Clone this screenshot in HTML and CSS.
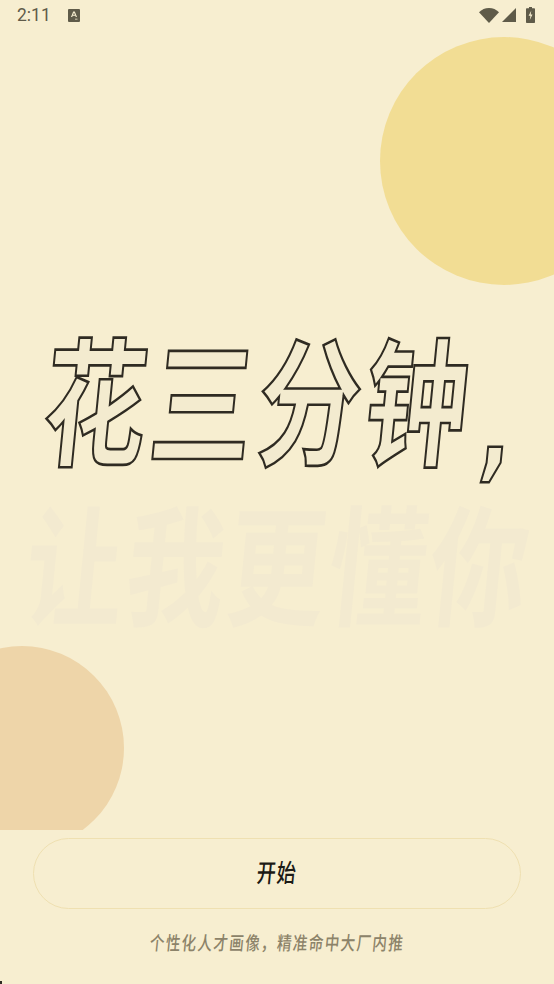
FILE: index.html
```html
<!DOCTYPE html>
<html lang="zh-CN">
<head>
<meta charset="utf-8">
<title>花三分钟</title>
<link rel="stylesheet" href="styles.css">
</head>
<body>
<div class="screen">
  <div class="hero">
    <div class="circle circle-top"></div>
    <div class="circle circle-bottom"></div>
    <header class="status">
      <span class="time">2:11</span>
      <svg class="a-icon" viewBox="0 0 12 13"><path fill="#5f5b49" fill-rule="evenodd" d="M1 0h10a1 1 0 0 1 1 1v11a1 1 0 0 1-1 1H1a1 1 0 0 1-1-1V1a1 1 0 0 1 1-1zM5.200 2.400 3 8h1.200l.45-1.300h2.700L7.800 8H9L6.800 2.400zM6 3.800l1 2H5zM7 9.800h2.500v.8H7z"/></svg>
      <span class="status-right">
        <svg class="wifi" viewBox="0 0 20 15"><path fill="#5f5b49" d="M0 4.200C2.700 1.600 6.200 0 10 0s7.300 1.600 10 4.200L10 15z"/></svg>
        <svg class="signal" viewBox="0 0 14 14"><path fill="#5f5b49" d="M14 0v14H0z"/></svg>
        <svg class="battery" viewBox="0 0 9 16"><path fill="#5f5b49" fill-rule="evenodd" d="M3 0h3v1.300h2.200a.8.8 0 0 1 .8.8v13.100a.8.8 0 0 1-.8.8H.8a.8.8 0 0 1-.8-.8V2.100a.8.8 0 0 1 .8-.8H3zM5.200 3.800 2.600 8.800h1.900L3.800 13l2.700-5.500H4.700z"/></svg>
      </span>
    </header>
    <div class="lines">
      <h1 class="line-main">花三分钟<span class="comma">,</span></h1>
      <p class="line-ghost">让我更懂你</p>
    </div>
  </div>
  <footer class="actions">
    <button class="start"><span class="start-label">开始</span></button>
    <p class="tagline">个性化人才画像，精准命中大厂内推</p>
  </footer>
</div>
</body>
</html>
```

FILE: styles.css
```css
* { box-sizing: border-box; margin: 0; padding: 0; }
html, body { width: 554px; height: 984px; overflow: hidden; }
body {
  background: #f7eed0;
  font-family: "Noto Sans CJK SC", "Noto Sans", sans-serif;
}
.screen { width: 554px; height: 984px; display: flex; flex-direction: column; }
.hero { position: relative; height: 830px; overflow: hidden; flex: none; }
.circle { position: absolute; border-radius: 50%; }
.circle-top { left: 380px; top: 37px; width: 248px; height: 248px; background: #f2dd94; }
.circle-bottom { left: -80px; top: 646px; width: 204px; height: 204px; background: #eed5a9; }
.status {
  position: relative;
  height: 30px;
  display: flex;
  align-items: center;
  padding: 0 19px 0 17px;
  color: #5f5b49;
}
.time { font: 400 17.500px/30px Roboto, sans-serif; width: 51px; }
.a-icon { width: 12px; height: 13px; }
.status-right { margin-left: auto; display: flex; align-items: center; gap: 3px; }
.wifi { width: 20px; height: 15px; }
.signal { width: 14px; height: 14px; }
.battery { width: 9px; height: 16px; margin-left: 7px; }
.lines { position: relative; padding-top: 291px; }
.line-main, .line-ghost { white-space: nowrap; transform-origin: 0 50%; }
.line-main {
  font-size: 103px;
  font-weight: 700;
  letter-spacing: 4px;
  line-height: 150px;
  color: #f3ebcf;
  -webkit-text-stroke: 2px #2f2b22;
  margin-left: 45px;
  transform: skewX(-5.600deg) scaleY(1.34);
}
.comma {
  font-family: "DejaVu Sans", sans-serif;
  font-weight: 700;
  font-size: 80px;
  line-height: 0;
  vertical-align: -9px;
  margin-left: 12px;
}
.line-ghost {
  font-size: 98px;
  font-weight: 700;
  letter-spacing: 3px;
  line-height: 134px;
  color: #f3ead0;
  margin-left: 27px;
  margin-top: 21px;
  transform: skewX(-5.600deg) scaleY(1.33);
}
.actions { position: relative; flex: 1; display: flex; flex-direction: column; align-items: center; padding-top: 8px; }
.actions::after {
  content: "";
  position: absolute;
  left: 0;
  bottom: 0;
  width: 2px;
  height: 3px;
  background: #2f2b22;
}
.start {
  width: 488px;
  height: 71px;
  padding-bottom: 6px;
  border-radius: 36px;
  border: 1px solid #efe0b1;
  background: transparent;
  display: flex;
  align-items: center;
  justify-content: center;
  font-family: inherit;
}
.start-label {
  display: block;
  font-size: 19px;
  font-weight: 500;
  letter-spacing: 1px;
  line-height: 32px;
  color: #1c1a15;
  transform: skewX(-5.600deg) scaleY(1.32);
}
.tagline {
  margin-top: 19px;
  font-size: 14.500px;
  font-weight: 500;
  letter-spacing: 1.400px;
  line-height: 28px;
  color: #8c8369;
  white-space: nowrap;
  transform: skewX(-5.600deg) scaleY(1.3);
}
```
